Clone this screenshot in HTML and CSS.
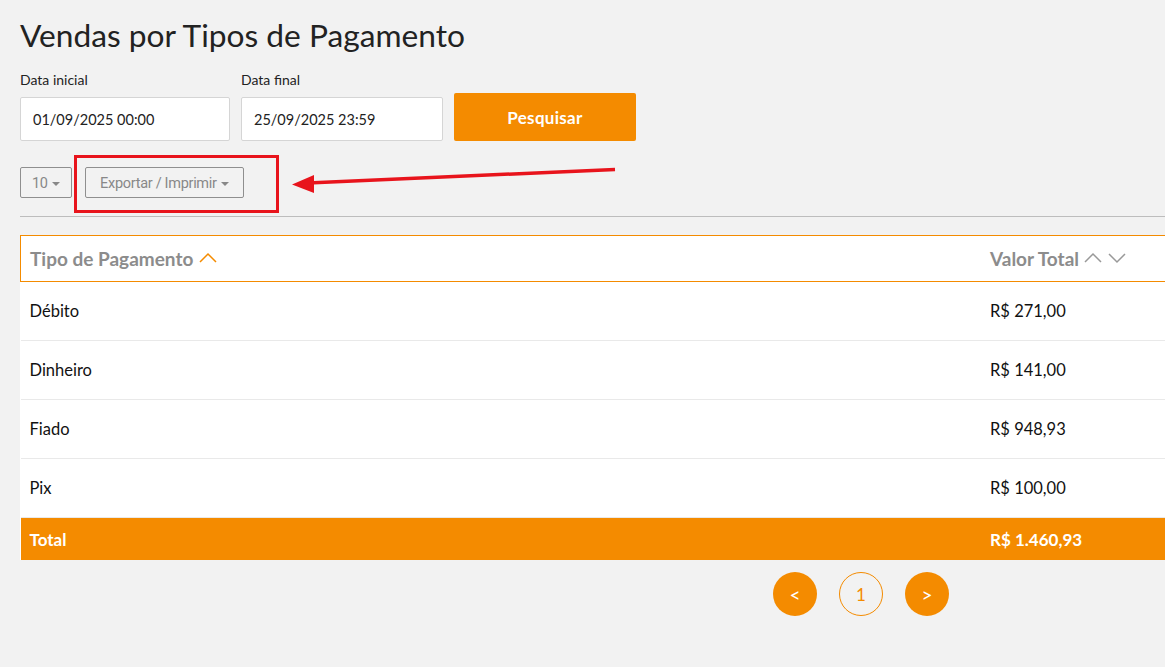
FILE: index.html
```html
<!DOCTYPE html>
<html lang="pt-BR">
<head>
  <meta charset="UTF-8" />
  <title>Vendas por Tipos de Pagamento</title>
  <link rel="stylesheet" href="styles.css">
</head>
<body>
  <div class="page">
    <h1>Vendas por Tipos de Pagamento</h1>

    <form class="filters">
      <div class="field field-start">
        <label>Data inicial</label>
        <input type="text" value="01/09/2025 00:00">
      </div>
      <div class="field field-end">
        <label>Data final</label>
        <input type="text" value="25/09/2025 23:59">
      </div>
      <button type="button" class="btn-search">Pesquisar</button>
    </form>

    <div class="toolbar">
      <button class="btn-tool btn-size">10 <span class="caret"></span></button>
      <button class="btn-tool btn-export">Exportar / Imprimir <span class="caret"></span></button>
    </div>

    <table class="report">
      <thead>
        <tr>
          <th>Tipo de Pagamento
            <svg class="sort" width="20" height="12" viewBox="0 0 20 12"><polyline points="2,10 10,2 18,10" fill="none" stroke="#f48b00" stroke-width="1.5"/></svg>
          </th>
          <th class="col-value">Valor Total
            <svg class="sort" width="44" height="12" viewBox="0 0 44 12"><polyline points="1,10 9,2 17,10" fill="none" stroke="#999" stroke-width="1.5"/><polyline points="25,2 33,10 41,2" fill="none" stroke="#999" stroke-width="1.5"/></svg>
          </th>
        </tr>
      </thead>
      <tbody>
        <tr><td>Débito</td><td>R$ 271,00</td></tr>
        <tr><td>Dinheiro</td><td>R$ 141,00</td></tr>
        <tr><td>Fiado</td><td>R$ 948,93</td></tr>
        <tr><td>Pix</td><td>R$ 100,00</td></tr>
      </tbody>
      <tfoot>
        <tr><td>Total</td><td>R$ 1.460,93</td></tr>
      </tfoot>
    </table>

    <div class="pagination">
      <button class="page-btn filled">&lt;</button>
      <button class="page-btn current">1</button>
      <button class="page-btn filled">&gt;</button>
    </div>
  </div>

  <!-- annotation -->
  <svg class="markup" width="1165" height="667" viewBox="0 0 1165 667">
    <rect x="75.5" y="156.5" width="202" height="55" fill="none" stroke="#e8141c" stroke-width="3"/>
    <line x1="615" y1="169.5" x2="308" y2="183" stroke="#e8141c" stroke-width="3.5"/>
    <polygon points="292,184.5 314,175 314,193" fill="#e8141c"/>
  </svg>
</body>
</html>
```

FILE: styles.css
```css
html {
  overflow-x: hidden;
}

body {
  margin: 0;
  background: #f2f2f2;
  color: #222;
  font-family: Lato, "Noto Sans", sans-serif;
}

.page {
  padding: 0 0 40px 20px;
}

h1 {
  margin: 0;
  padding-top: 17px;
  font-size: 31.7px;
  font-weight: 400;
  line-height: 36px;
  color: #222;
}

.filters {
  display: flex;
  align-items: flex-end;
  margin-top: 18px;
}

.field {
  display: flex;
  flex-direction: column;
  margin-right: 11px;
}

.field label {
  font-size: 14px;
  line-height: 18px;
  margin-bottom: 8px;
}

.field input {
  box-sizing: border-box;
  height: 44px;
  border: 1px solid #d5d5d5;
  border-radius: 2px;
  padding: 0 12px;
  font-family: inherit;
  font-size: 14.5px;
  color: #222;
  background: #fff;
}

.field-start input { width: 210px; }
.field-end input { width: 202px; }

.btn-search {
  width: 182px;
  height: 48px;
  border: none;
  border-radius: 2px;
  background: #f48b00;
  color: #fff;
  font-family: inherit;
  font-size: 17px;
  font-weight: 700;
  letter-spacing: 0.3px;
  cursor: pointer;
}

.toolbar {
  display: flex;
  gap: 13px;
  margin-top: 26px;
  padding-bottom: 18px;
  border-bottom: 1px solid #bdbdbd;
}

.btn-tool {
  height: 31px;
  border: 1px solid #8f8f8f;
  border-radius: 2px;
  background: #f2f2f2;
  color: #888;
  font-family: Roboto, sans-serif;
  font-size: 14.5px;
  padding: 1px 10px 0;
  letter-spacing: -0.3px;
}

.btn-size { width: 52px; padding: 1px 8px 0; }
.btn-export { width: 159px; }

.caret {
  display: inline-block;
  width: 0;
  height: 0;
  border-left: 4px solid transparent;
  border-right: 4px solid transparent;
  border-top: 4px solid #888;
  vertical-align: middle;
  margin-left: 1px;
}

.report {
  margin-top: 18px;
  width: 1170px;
  border-collapse: collapse;
  background: #fff;
}

.report th {
  text-align: left;
  height: 45px;
  padding: 0 10px;
  border-top: 1px solid #f48b00;
  border-bottom: 1px solid #f48b00;
  background: #fff;
  color: #8c8c8c;
  font-size: 19px;
  font-weight: 700;
}

.report th:first-child {
  border-left: 1px solid #f48b00;
  padding-left: 9px;
}

.report .col-value {
  width: 190px;
}

.sort {
  vertical-align: 2px;
}

.report td {
  height: 58px;
  padding: 0 10px;
  font-size: 16.5px;
  color: #111;
  border-bottom: 1px solid #e9e9e9;
}

.report td:first-child {
  padding-left: 9px;
}

.report tfoot td {
  height: 42px;
  background: #f48b00;
  color: #fff;
  font-size: 17px;
  font-weight: 700;
  border-bottom: none;
}

.pagination {
  display: flex;
  gap: 22px;
  margin: 12px 0 0 753px;
}

.page-btn {
  width: 44px;
  height: 44px;
  border-radius: 50%;
  font-family: inherit;
  font-size: 17px;
  cursor: pointer;
}

.page-btn.filled {
  background: #f48b00;
  border: none;
  color: #fff;
  font-size: 19px;
}

.page-btn.current {
  background: #f2f2f2;
  border: 1px solid #f48b00;
  color: #f48b00;
}

.markup {
  position: absolute;
  top: 0;
  left: 0;
  pointer-events: none;
}
```
